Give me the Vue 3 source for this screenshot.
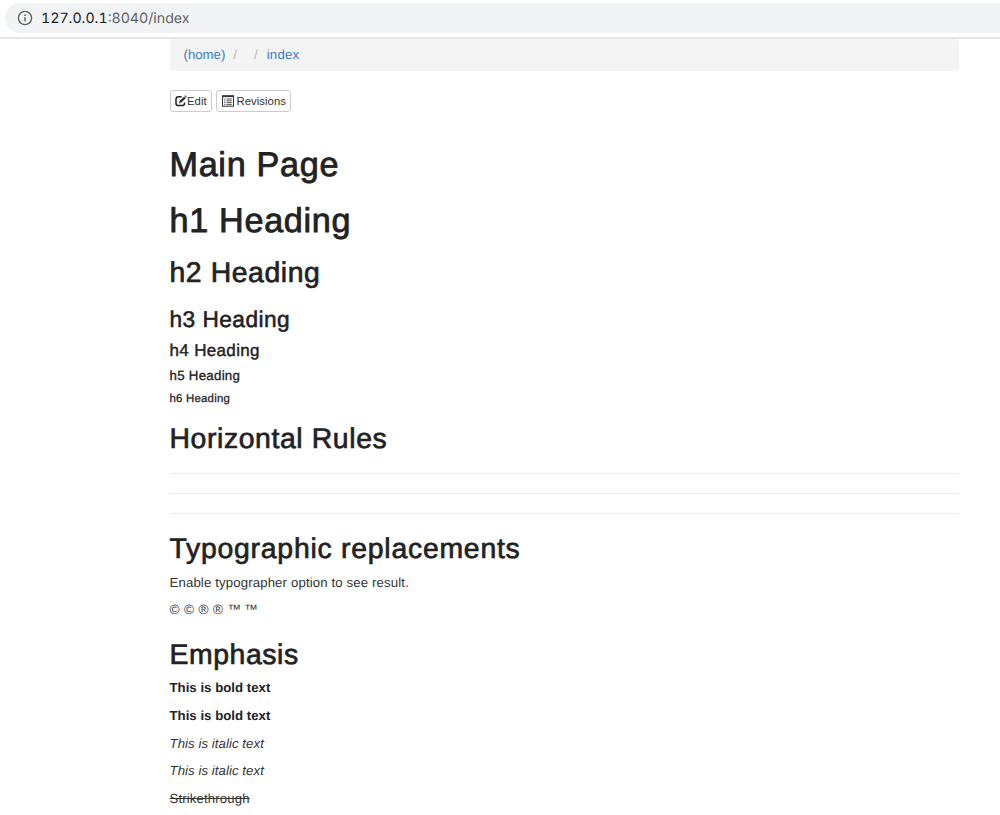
<script setup>
const headings = [
  { tag: 'h1', text: 'Main Page', cls: 'title' },
  { tag: 'h1', text: 'h1 Heading', cls: '' },
  { tag: 'h2', text: 'h2 Heading', cls: '' },
  { tag: 'h3', text: 'h3 Heading', cls: '' },
  { tag: 'h4', text: 'h4 Heading', cls: '' },
  { tag: 'h5', text: 'h5 Heading', cls: '' },
  { tag: 'h6', text: 'h6 Heading', cls: '' },
]
</script>

<template>
  <div class="page">
    <header class="toolbar">
      <div class="address">
        <svg class="info" viewBox="0 0 16 16" width="16" height="16">
          <circle cx="8" cy="8" r="6.6" fill="none" stroke="#5f6368" stroke-width="1.4" />
          <path d="M8 7.2v4M8 4.6v1.5" stroke="#5f6368" stroke-width="1.5" />
        </svg>
        <span class="url"><span class="host">127.0.0.1</span>:8040/index</span>
      </div>
    </header>
    <main class="container">
      <nav class="breadcrumb">
        <a>(home)</a><span class="sep first">/</span><span class="sep second">/</span><a class="current">index</a>
      </nav>
      <div class="actions">
        <button class="btn edit">
          <svg viewBox="0 0 12 12" width="12" height="12">
            <path d="M6.6 1.7H3.6Q1 1.7 1 4.3v3.9q0 2.4 2.4 2.4h3.9q2.2 0 2.2-2.4V7.6" fill="none" stroke="#222" stroke-width="1.5" />
            <path d="M4 8.4l.5-2.3L9.2 1.4l1.7 1.7-4.7 4.7z" fill="#333" />
            <path d="M5.1 6.7l1 1" stroke="#fff" stroke-width=".7" />
            <path d="M9.7.9l.6-.6 1.6 1.6-.6.6z" fill="#222" />
          </svg>Edit
        </button>
        <button class="btn revisions">
          <svg viewBox="0 0 12 12" width="12" height="12">
            <rect x=".5" y=".8" width="11" height="10.4" fill="#fff" stroke="#333" stroke-width="1" />
            <path d="M.5 1.3h11" stroke="#333" stroke-width="1.6" />
            <path d="M2.2 4h1.3M2.2 5.8h1.3M2.2 7.6h1.3M2.2 9.4h1.3M4.5 4h5.3M4.5 5.8h5.3M4.5 7.6h5.3M4.5 9.4h5.3" stroke="#444" stroke-width=".9" />
          </svg>Revisions
        </button>
      </div>
      <component :is="h.tag" v-for="h in headings" :key="h.text" :class="h.cls">{{ h.text }}</component>
      <h2 class="rules-title">Horizontal Rules</h2>
      <hr><hr><hr>
      <h2 class="typo-title">Typographic replacements</h2>
      <p class="intro">Enable typographer option to see result.</p>
      <p class="marks"><span>©</span><span>©</span><span>®</span><span>®</span><span class="tm">™</span><span class="tm">™</span></p>
      <h2 class="emphasis-title">Emphasis</h2>
      <p><strong>This is bold text</strong></p>
      <p><strong>This is bold text</strong></p>
      <p><em>This is italic text</em></p>
      <p><em>This is italic text</em></p>
      <p><s>Strikethrough</s></p>
    </main>
  </div>
</template>

<style>
body { margin: 0; background: #fff; overflow: hidden; }
</style>

<style scoped>
.page {
  height: 815px;
  overflow: hidden;
  font-family: "Liberation Sans", Arial, sans-serif;
  font-size: 13.2px;
  color: #333;
  text-rendering: geometricPrecision;
}
.toolbar {
  box-sizing: border-box;
  height: 39px;
  padding: 3px 0 0 5px;
  border-bottom: 2px solid #e6e6e6;
}
.address {
  display: flex;
  align-items: center;
  height: 30px;
  padding-left: 12px;
  border-radius: 15px 0 0 15px;
  background: #f1f3f4;
}
.info { display: block; margin-right: 8px; }
.url {
  font-family: Inter, Roboto, sans-serif;
  font-size: 14.2px;
  font-feature-settings: "tnum";
  letter-spacing: 0;
  color: #5f6368;
}
.host { color: #202124; }
.container { width: 789px; margin-left: 169.5px; }
.breadcrumb {
  display: flex;
  align-items: center;
  box-sizing: border-box;
  height: 32px;
  padding: 0 0 1px 14px;
  border-radius: 4px;
  background: #f4f4f4;
}
.breadcrumb a { color: #3c7bc0; }
.breadcrumb .current { letter-spacing: 0.25px; }
.sep { color: #bbb; }
.first { margin-left: 8px; }
.second { margin: 0 9px 0 17px; }
.actions { display: flex; gap: 4px; margin-top: 19px; height: 22px; }
.btn {
  display: flex;
  align-items: center;
  box-sizing: border-box;
  height: 22px;
  padding: 0 0 0 4.5px;
  border: 1px solid #ccc;
  border-radius: 3px;
  background: #fff;
  color: #333;
  font-family: inherit;
  font-size: 11.3px;
  letter-spacing: 0.05px;
}
.edit { width: 42.5px; }
.revisions { width: 75px; }
.revisions svg { margin-right: 3px; }
h1, h2, h3, h4, h5, h6 {
  margin: 0;
  font-weight: 400;
  letter-spacing: 0.02em;
  color: #222;
  -webkit-text-stroke: 0.024em #222;
  white-space: nowrap;
}
h1 { margin-top: 20px; font-size: 34.2px; line-height: 36px; }
h1.title { margin-top: 35px; }
h2 { margin-top: 19px; font-size: 28.4px; line-height: 30px; }
h3 { margin-top: 19px; font-size: 22.7px; line-height: 24px; }
h4 { margin-top: 11px; font-size: 17px; line-height: 18px; }
h5 { margin-top: 9px; font-size: 13.3px; line-height: 14px; }
h6 { margin-top: 9.5px; font-size: 11.4px; line-height: 12px; }
.rules-title { margin-top: 19.5px; letter-spacing: 0.021em; }
hr { height: 1px; margin: 19px 0 0; border: 0; background: #ebebeb; }
.typo-title { margin-top: 20px; letter-spacing: 0.0265em; }
p { margin: 0 0 9.7px; line-height: 18px; letter-spacing: 0.14px; }
.intro { margin: 10px 0 9px; }
.marks { display: flex; gap: 3.8px; margin: 0; height: 18px; letter-spacing: 0; }
.marks span { width: 10.7px; font-size: 13.6px; }
.marks .tm { width: 13px; }
.emphasis-title { margin: 21px 0 9.3px; }
strong { letter-spacing: 0.03px; color: #222; }
em { letter-spacing: 0.07px; }
</style>
